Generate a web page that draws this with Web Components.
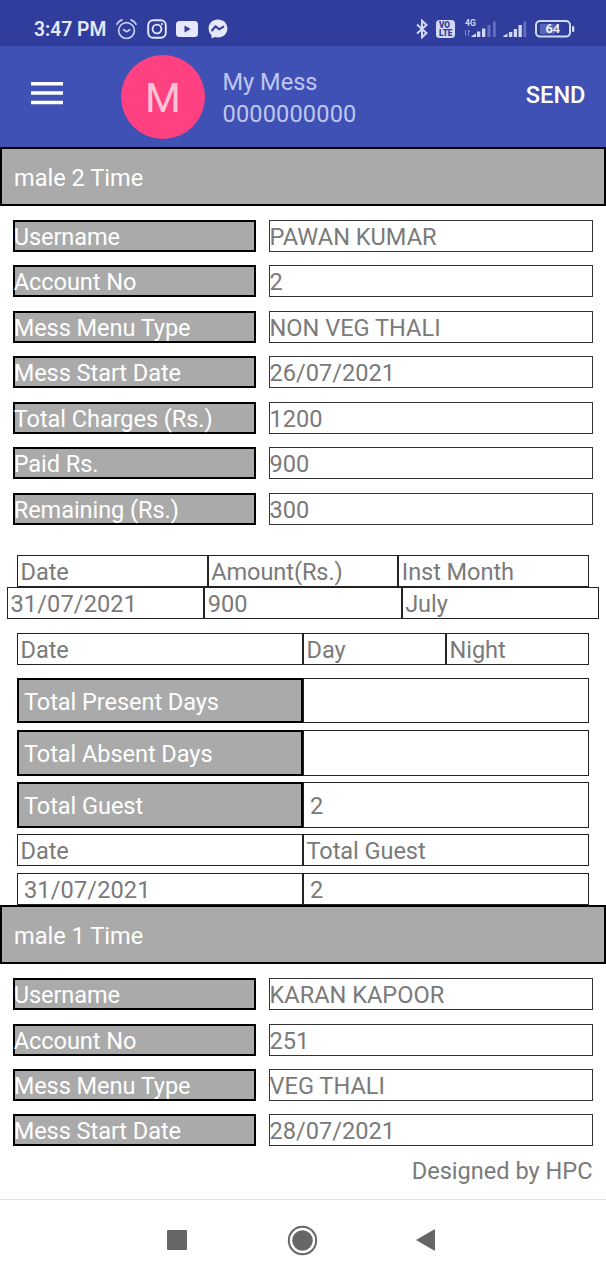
<!DOCTYPE html>
<html lang="en">
<head>
<meta charset="utf-8">
<meta name="viewport" content="width=device-width">
<title>My Mess</title>
<style>
html,body{margin:0;padding:0;height:100%;background:#fff;overflow:hidden}
body{font-family:Roboto,"Liberation Sans",sans-serif;font-size:23.57px;color:#7a7a7a}
</style>
</head>
<body>
<mess-app></mess-app>
<script>
const define = (name, html, setup) => {
  const template = document.createElement('template');
  template.innerHTML = '<style>*{box-sizing:border-box}:host{box-sizing:border-box}</style>' + html;
  customElements.define(name, class extends HTMLElement {
    constructor() {
      super();
      this.attachShadow({mode: 'open'}).append(template.content.cloneNode(true));
    }
    connectedCallback() { if (setup) setup(this); }
  });
};

define('status-bar', `
<style>
:host{display:flex;align-items:center;height:46px;background:#303d9c;padding:12px 31px 0 34px;color:#e6e9fb}
.time{font-size:19.3px;font-weight:600;line-height:32px;width:82px;white-space:nowrap;padding-top:1px}
svg{display:block;flex:none}
.left{display:flex;align-items:center;gap:9.500px}
.right{display:flex;align-items:center;margin-left:auto;color:#d3d8f6}
</style>
<span class="time">3:47 PM</span>
<div class="left">
<svg width="21" height="22" viewBox="0 0 21 22" fill="none" stroke="#c9cff3" stroke-width="1.7" stroke-linecap="round"><circle cx="10.5" cy="12.6" r="7.9"/><path d="M1 6.2Q2.6 3 6 1.9M20 6.2Q18.4 3 15 1.9M7.6 11.8l3 2 3.2-2"/></svg>
<svg width="20" height="20" viewBox="0 0 20 20" fill="none" stroke="currentColor" stroke-width="1.9"><rect x="1.2" y="1.2" width="17.6" height="17.6" rx="5"/><circle cx="10" cy="10" r="4.4"/><circle cx="15" cy="5" r=".7" fill="currentColor" stroke-width=".8"/></svg>
<svg width="22" height="16" viewBox="0 0 22 16"><rect width="22" height="16" rx="3.5" fill="currentColor"/><path d="M8.5 4.6v6.8L14.6 8z" fill="#303d9c"/></svg>
<svg width="20" height="20" viewBox="0 0 20 20"><path d="M10 .4C4.5.4.6 4.200.6 9.400c0 2.800 1.100 5.100 2.900 6.700V19.600l3.200-1.600c1 .3 2.100.4 3.300.4 5.500 0 9.400-3.900 9.400-9S15.500.4 10 .4z" fill="currentColor"/><path d="M3.600 12l4-4.700 3.400 3 5-3" fill="none" stroke="#303d9c" stroke-width="2.100" stroke-linejoin="round"/></svg>
</div>
<div class="right">
<svg width="12" height="20" viewBox="0 0 12 20" fill="none" stroke="currentColor" stroke-width="2"><path d="M1 5.500l9.500 8.500L6 18.300V1.700L10.500 6 1 14.500"/></svg>
<svg style="margin-left:8px" width="19" height="18" viewBox="0 0 19 18"><rect width="19" height="18" rx="3.500" fill="currentColor"/><g fill="#303d9c" font-family="Roboto,sans-serif" font-weight="900" font-size="8.500"><text x="3" y="8" textLength="11" lengthAdjust="spacingAndGlyphs">VO</text><text x="3" y="15.800" textLength="13.500" lengthAdjust="spacingAndGlyphs">LTE</text></g></svg>
<svg style="margin-left:10px" width="32" height="22" viewBox="0 0 32 22"><text x="0" y="7.500" font-family="Roboto,sans-serif" font-size="8.500" font-weight="700" fill="currentColor">4G</text><path d="M.5 12v6M3.500 18v-6l1.500 2" stroke="#7e88ca" fill="none"/><path d="M6.500 19v-1l4.500-2.500V19zM12 19v-5.500h3.300V19zM17 19v-8.500h3.300V19z" fill="currentColor"/><path d="M22.500 19V7h3v12zM28 19V3.500h2.700V19z" fill="#6571bd"/></svg>
<svg style="margin-left:6px" width="24" height="22" viewBox="0 0 24 22"><path d="M.3 19v-1l4.200-2.500V19zM6 19v-5h3.300v5zM10.700 19v-8h3.300v8zM15.500 19V7h3.300v12z" fill="currentColor"/><path d="M20.500 19V3.500h2.700V19z" fill="#6571bd"/></svg>
<svg style="margin-left:8.500px" width="40" height="18" viewBox="0 0 40 18"><rect x="1" y="1" width="34" height="15.600" rx="4" fill="none" stroke="currentColor" stroke-width="2"/><rect x="5" y="4" width="15" height="10" fill="#5965b5"/><rect x="37" y="6" width="2.300" height="6" rx="1" fill="currentColor"/><text x="10.500" y="13.300" font-family="Roboto,sans-serif" font-weight="700" font-size="12.800" fill="#eef0ff">64</text></svg>
</div>`);

define('app-toolbar', `
<style>
:host{display:flex;align-items:center;height:101px;background:#3f51b5;padding:0 20.500px 0 31px}
svg{display:block;margin-bottom:8px}
.avatar{width:84px;height:84px;margin:0 17.500px 0 58px;border-radius:50%;background:#ff4081;color:#ffc3d8;font-size:41px;line-height:87px;text-align:center}
.who{color:#bfc7f0;line-height:32px;flex:1;padding-top:2px}
.phone{letter-spacing:.15px}
.send{color:#fff;font-weight:500;line-height:32px;padding-bottom:4px}
</style>
<svg width="32" height="24" viewBox="0 0 32 24" fill="#fff"><path d="M0 1h32v3.500H0zM0 10.300h32v3.500H0zM0 19.700h32v3.500H0z"/></svg>
<div class="avatar">M</div>
<div class="who"><div><slot name="name"></slot></div><div class="phone"><slot name="phone"></slot></div></div>
<div class="send">SEND</div>`);

define('plan-banner', `
<style>:host{display:block;height:59px;background:#aaa;border:2px solid #000;color:#fff;padding:13px 0 0 12px;line-height:32px}</style><slot></slot>`);

define('field-row', `
<style>
:host{display:grid;grid-template-columns:243px 324px;grid-template-rows:32px;gap:13px;margin:0 13px 13.450px;height:32px;line-height:32px;white-space:nowrap}
.k{background:#aaa;color:#fff;box-shadow:inset 0 0 0 2px #000;padding:1px 0 0 .7px;letter-spacing:-.07px}
.v{box-shadow:inset 0 0 0 1px #333;padding:1px 0 0 .5px}
</style><div class="k"></div><div class="v"><slot></slot></div>`,
el => { el.shadowRoot.querySelector('.k').textContent = el.getAttribute('label'); });

define('table-row', `
<style>
:host{display:grid;grid-template-columns:repeat(3,1fr);grid-template-rows:100%;margin:0 17px;height:32px}
:host([two]){grid-template-columns:1fr 1fr}
:host([split]){grid-template-columns:2fr 1fr 1fr}
</style><slot></slot>`);

define('table-cell', `
<style>
:host{min-width:0;border:1px solid #222;line-height:32px;padding-left:2.500px;white-space:nowrap;letter-spacing:-.07px}
:host([date]){letter-spacing:.12px}
:host([inset]){padding-left:6px}
:host([tall]){line-height:46px}
:host([head]){background:#aaa;color:#fff;border:2px solid #000;padding-left:5px;line-height:44px}
</style><slot></slot>`);

define('nav-bar', `
<style>
:host{display:flex;align-items:center;height:81px;border-top:1px solid #e2e2e2;padding:0 0 0 167px}
svg{display:block;fill:#666}
</style>
<svg width="20" height="20"><rect width="20" height="20" rx="1"/></svg>
<svg style="margin-left:100px" width="31" height="31" viewBox="0 0 31 31"><circle cx="15.500" cy="15.500" r="13.700" fill="none" stroke="#666" stroke-width="2"/><circle cx="15.500" cy="15.500" r="10.300"/></svg>
<svg style="margin-left:98px" width="19" height="22" viewBox="0 0 19 22"><path d="M0 11L18 .4Q19 0 19 1v20q0 1-1 .6z"/></svg>`);

define('mess-app', `
<style>
:host{display:flex;flex-direction:column;width:606px;height:1280px;background:#fff}
main{flex:1;min-height:0;overflow:hidden}
.fields{padding-top:14px}
.log{margin-top:30.500px}
.wide{margin:0 7px}
footer{height:44px;padding:0 13.500px;text-align:right;line-height:32px}
</style>
<status-bar></status-bar>
<app-toolbar><span slot="name">My Mess</span><span slot="phone">0000000000</span></app-toolbar>
<main>
<plan-banner>male 2 Time</plan-banner>
<div class="fields">
<field-row label="Username">PAWAN KUMAR</field-row>
<field-row label="Account No">2</field-row>
<field-row label="Mess Menu Type">NON VEG THALI</field-row>
<field-row label="Mess Start Date">26/07/2021</field-row>
<field-row label="Total Charges (Rs.)">1200</field-row>
<field-row label="Paid Rs.">900</field-row>
<field-row label="Remaining (Rs.)">300</field-row>
</div>
<div class="log">
<table-row><table-cell>Date</table-cell><table-cell>Amount(Rs.)</table-cell><table-cell>Inst Month</table-cell></table-row>
<table-row class="wide"><table-cell date>31/07/2021</table-cell><table-cell>900</table-cell><table-cell>July</table-cell></table-row>
<table-row split style="margin-top:13.500px"><table-cell>Date</table-cell><table-cell>Day</table-cell><table-cell>Night</table-cell></table-row>
<table-row two style="margin-top:13.500px;height:45px"><table-cell head>Total Present Days</table-cell><table-cell tall></table-cell></table-row>
<table-row two style="margin-top:7px;height:45.500px"><table-cell head>Total Absent Days</table-cell><table-cell tall></table-cell></table-row>
<table-row two style="margin-top:6.500px;height:45.500px"><table-cell head>Total Guest</table-cell><table-cell tall inset>2</table-cell></table-row>
<table-row two style="margin-top:6.500px"><table-cell>Date</table-cell><table-cell>Total Guest</table-cell></table-row>
<table-row two style="margin-top:7px"><table-cell date inset>31/07/2021</table-cell><table-cell inset>2</table-cell></table-row>
</div>
<plan-banner>male 1 Time</plan-banner>
<div class="fields">
<field-row label="Username">KARAN KAPOOR</field-row>
<field-row label="Account No">251</field-row>
<field-row label="Mess Menu Type">VEG THALI</field-row>
<field-row label="Mess Start Date">28/07/2021</field-row>
</div>
</main>
<footer>Designed by HPC</footer>
<nav-bar></nav-bar>`);
</script>
</body>
</html>
